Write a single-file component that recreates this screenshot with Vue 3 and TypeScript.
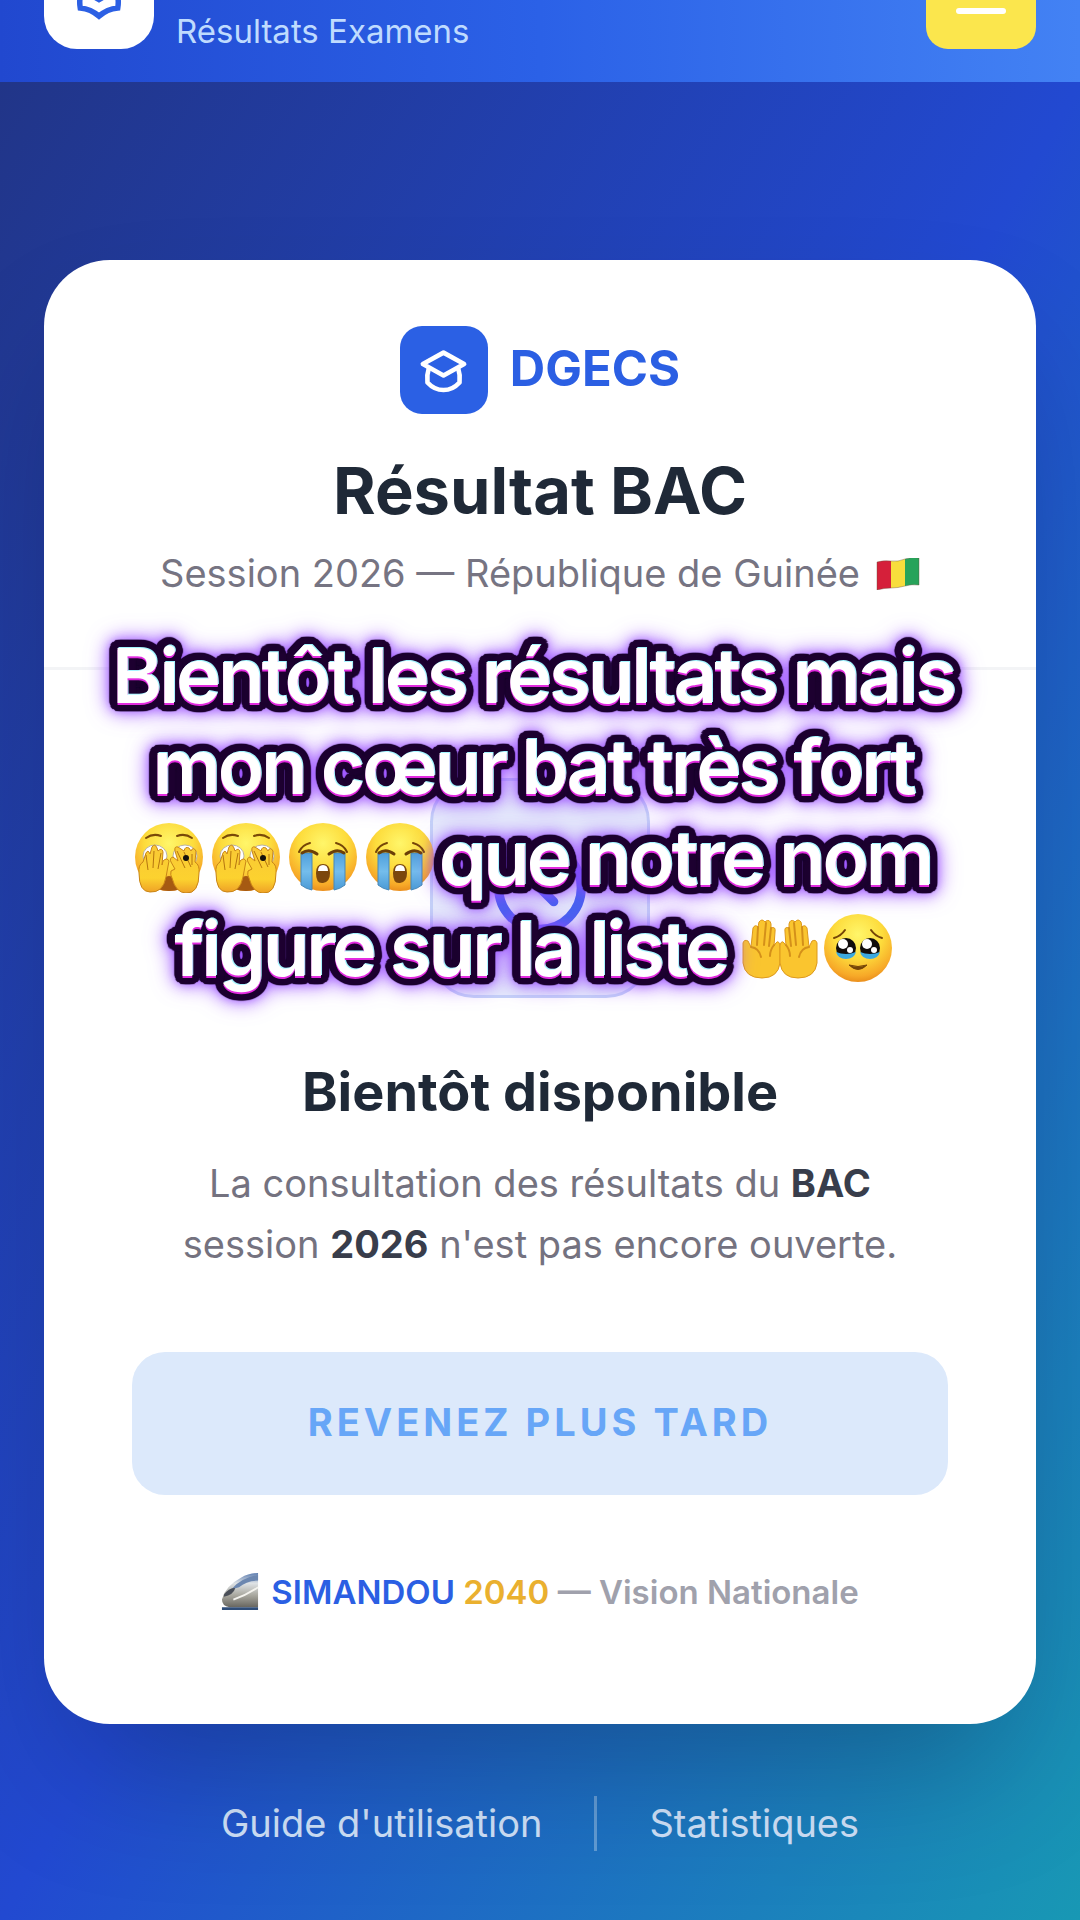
<script setup lang="ts">
interface CaptionPart {
  kind: 'text' | 'emoji'
  value: string
}

const caption: CaptionPart[][] = [
  [{ kind: 'text', value: 'Bientôt les résultats mais' }],
  [{ kind: 'text', value: 'mon cœur bat très fort' }],
  [
    { kind: 'emoji', value: 'peek' },
    { kind: 'emoji', value: 'peek' },
    { kind: 'emoji', value: 'sob' },
    { kind: 'emoji', value: 'sob' },
    { kind: 'text', value: 'que notre nom' },
  ],
  [
    { kind: 'text', value: 'figure sur la liste' },
    { kind: 'emoji', value: 'palms' },
    { kind: 'emoji', value: 'tears' },
  ],
]

// A ring of shadows makes a dark outline with round corners.
function ring(radius: number, steps: number): string[] {
  return Array.from({ length: steps }, (_, i) => {
    const angle = (i / steps) * Math.PI * 2
    const x = (Math.cos(angle) * radius).toFixed(2)
    const y = (Math.sin(angle) * radius).toFixed(2)
    return `${x}px ${y}px 1px #1d0030`
  })
}

const outline = [
  '0 2px #e22be0',
  '1px -1px #a5f6ff',
  ...ring(8, 40),
  ...ring(4, 16),
].join(', ')
</script>

<template>
  <div class="page">
    <svg class="sprites" aria-hidden="true">
      <defs>
        <radialGradient id="face" cx="50%" cy="30%" r="72%">
          <stop offset="0" stop-color="#fff66a" />
          <stop offset="0.5" stop-color="#fddc3c" />
          <stop offset="0.85" stop-color="#f7a928" />
          <stop offset="1" stop-color="#e8891a" />
        </radialGradient>
        <linearGradient id="skin" x1="0" y1="0" x2="0" y2="1">
          <stop offset="0" stop-color="#f9c935" />
          <stop offset="0.7" stop-color="#fcd22f" />
          <stop offset="1" stop-color="#efa226" />
        </linearGradient>
        <linearGradient id="tear" x1="0" y1="0" x2="0" y2="1">
          <stop offset="0" stop-color="#4f9fdb" />
          <stop offset="0.5" stop-color="#74bdec" />
          <stop offset="1" stop-color="#4a9ad6" />
        </linearGradient>
        <linearGradient id="steel" x1="0" y1="0" x2="0" y2="1">
          <stop offset="0" stop-color="#5d7db0" />
          <stop offset="0.3" stop-color="#dfe3e6" />
          <stop offset="0.65" stop-color="#a9a89f" />
          <stop offset="1" stop-color="#68665f" />
        </linearGradient>
      </defs>
      <symbol id="emoji-peek" viewBox="0 0 68 70">
        <circle cx="34" cy="34" r="34" fill="url(#face)" />
        <path d="M11 15q7-5 15-2M42 13q8-3 15 2" fill="none" stroke="#7a4a08" stroke-width="2" stroke-linecap="round" />
        <ellipse cx="20" cy="33" rx="12" ry="11" fill="#fff" stroke="#b9b2a4" />
        <ellipse cx="50" cy="33" rx="12" ry="11" fill="#fff" stroke="#b9b2a4" />
        <circle cx="50" cy="34" r="4" fill="#15100c" />
        <path d="M23 66q3-13 11-13t11 13q-11 4-22 0z" fill="#a65a12" />
        <g fill="url(#skin)" stroke="#c98516">
          <path d="M4 50q-1-8 4-11l3-9q2-4 4 1l2-7q3-4 5 1l1 3q4-4 5 1l-1 13 1-4q4-4 6 0l-3 16q-3 16-16 15-11 0-11-19z" />
          <path d="M64 50q1-8-4-11l1-11q-3-5-5 0l-2-3q-4-2-5 3l-6-4q-4-1-3 4l3 10-5-4q-4 1-2 5l4 7-4 2q-1 4 1 7 4 15 14 15 13 1 13-20z" />
        </g>
        <path d="M11 32l2 15M19 28l-1 17M26 30l-3 16M42 28l8 17M49 29l7 15M57 31v11" fill="none" stroke="#b5750f" />
        <circle cx="51" cy="35" r="3" fill="#15100c" />
      </symbol>
      <symbol id="emoji-sob" viewBox="0 0 68 70">
        <circle cx="34" cy="34" r="34" fill="url(#face)" />
        <path d="M10 29q3-7 11-9M58 29q-3-7-11-9" fill="none" stroke="#754507" stroke-width="2" stroke-linecap="round" />
        <path d="M12 30h11v37q-6-1-11-5zM45 30h11v32q-5 4-11 5z" fill="url(#tear)" stroke="#4687b8" />
        <path d="M13 30q7-5 15 1M55 30q-7-5-15 1" fill="none" stroke="#6b3f08" stroke-width="3" stroke-linecap="round" />
        <path d="M27 50q0-9 7-9t7 9-7 10-7-10z" fill="#7b470d" />
        <path d="M29 48q0-6 5-6t5 6z" fill="#fff" />
      </symbol>
      <symbol id="emoji-palms" viewBox="0 0 76 62">
        <g id="palm">
          <path d="M1 39V25q1-4 5-2l3 6L11 10q2-4 5-1l1-5q3-4 6 0l1-1q4-2 5 3v4q5-2 4 4l-1 14q4-8 6-1v18q-2 15-18 15Q3 60 1 45z" fill="#fac52f" stroke="#dd991d" />
          <path d="M16 9l-1 18M24 5l-2 22M29 10l-2 18M32 27q-4 5-4 11M9 29q8 1 10 10" fill="none" stroke="#d4901a" stroke-width="2" stroke-linecap="round" />
        </g>
        <use href="#palm" transform="matrix(-1 0 0 1 76 0)" />
      </symbol>
      <symbol id="emoji-tears" viewBox="0 0 68 70">
        <circle cx="34" cy="34" r="34" fill="url(#face)" />
        <path d="M10 24q7-2 11-8M58 24q-7-2-11-8" fill="none" stroke="#754507" stroke-width="2" stroke-linecap="round" />
        <circle cx="22" cy="34" r="10" fill="#100d0c" />
        <circle cx="46" cy="34" r="10" fill="#100d0c" />
        <path d="M12 38q10 4 20 0-2 7-10 7t-10-7zM36 38q10 4 20 0-2 7-10 7t-10-7z" fill="#3ba9e0" />
        <g fill="#fff">
          <circle cx="19" cy="30" r="5" />
          <circle cx="26" cy="36" r="3" />
          <circle cx="43" cy="30" r="5" />
          <circle cx="50" cy="36" r="3" />
        </g>
        <path d="M25 51q9 9 18 0-9 3-18 0z" fill="#754507" stroke="#754507" stroke-linejoin="round" />
      </symbol>
    </svg>

    <header class="topbar">
      <div class="topbar-brand">
        <span class="topbar-logo">
          <svg viewBox="0 0 24 24" class="topbar-cap" aria-hidden="true">
            <path d="M12 14l9-5-9-5-9 5 9 5zm0 0l6.16-3.422a12.083 12.083 0 01.665 6.479A11.952 11.952 0 0012 20.055a11.952 11.952 0 00-6.824-2.998 12.078 12.078 0 01.665-6.479L12 14z" />
          </svg>
        </span>
        <span class="topbar-subtitle">Résultats Examens</span>
      </div>
      <button class="menu" type="button" aria-label="Menu">
        <span class="menu-line"></span>
      </button>
    </header>

    <main class="main">
      <section class="card">
        <div class="card-head">
          <div class="brand">
            <span class="brand-tile">
              <svg viewBox="0 0 24 24" class="brand-cap" aria-hidden="true">
                <path d="M12 14.200l9-5-9-5-9 5 9 5z" />
                <path d="M5.600 11q-1 3-.6 6.200Q8 20.500 12 20.500t7-3.300q.4-3.200-.6-6.200" />
              </svg>
            </span>
            <span class="brand-name">DGECS</span>
          </div>
          <h1 class="title">Résultat BAC</h1>
          <p class="session">
            <span>Session 2026 — République de Guinée</span>
            <svg class="flag" viewBox="0 0 44 32" role="img" aria-label="Guinée">
              <path d="M1 4q7-2 14-1v27q-7 0-14 2z" fill="#d5203a" />
              <path d="M15 3q7 1 14-2v27q-7 2-14 2z" fill="#f8dd3c" />
              <path d="M29 1q7-2 14-1v27q-7-1-14 1z" fill="#27a35a" />
              <path d="M1 4q7-2 14-1t14-2 14-1v27q-7-1-14 1t-14 2-14 2z" fill="none" stroke="#66503a" stroke-opacity=".4" />
            </svg>
          </p>
        </div>

        <div class="card-body">
          <span class="clock-tile">
            <svg viewBox="0 0 24 24" class="clock" aria-hidden="true">
              <path d="M12 8v4l3 3m6-3a9 9 0 11-18 0 9 9 0 0118 0z" />
            </svg>
          </span>
          <h2 class="soon">Bientôt disponible</h2>
          <p class="message">
            La consultation des résultats du <strong>BAC</strong><br />
            session <strong>2026</strong> n'est pas encore ouverte.
          </p>
          <button class="later" type="button" disabled>REVENEZ PLUS TARD</button>
          <p class="vision">
            <svg class="train" viewBox="0 0 38 40" aria-hidden="true">
              <path d="M38 0v36H8Q0 35 0 28 3 14 20 5 28 0 38 0z" fill="url(#steel)" />
              <path d="M38 2Q20 5 10 17l8-2Q26 8 38 8z" fill="#6c87b0" />
              <path d="M2 23q6-8 12-7-2 7-12 9z" fill="#4a4f58" />
              <path d="M0 36h38v3H0z" fill="#2f4d78" />
              <path d="M12 28q14-5 26-13" fill="none" stroke="#f4f3ee" stroke-width="2" />
            </svg>
            <span><span class="simandou">SIMANDOU</span> <span class="year">2040</span> — Vision Nationale</span>
          </p>
        </div>

        <div class="caption">
          <div v-for="(line, i) in caption" :key="i" class="caption-line">
            <template v-for="(part, j) in line" :key="j">
              <span v-if="part.kind === 'text'" class="caption-text" :style="{ textShadow: outline }">{{ part.value }}</span>
              <svg v-else :class="['emoji', part.value]" aria-hidden="true">
                <use :href="'#emoji-' + part.value" />
              </svg>
            </template>
          </div>
        </div>
      </section>

      <nav class="links">
        <a href="#guide">Guide d'utilisation</a>
        <span class="links-rule"></span>
        <a href="#stats">Statistiques</a>
      </nav>
    </main>
  </div>
</template>

<style>
body {
  margin: 0;
  overflow-x: hidden;
}
</style>

<style scoped>
.page {
  display: flex;
  flex-direction: column;
  min-height: 100vh;
  font-family: Inter, sans-serif;
  color: #1f2937;
}

.sprites {
  position: absolute;
  width: 0;
  height: 0;
}

.topbar {
  display: flex;
  justify-content: space-between;
  align-items: flex-end;
  box-sizing: border-box;
  height: 82px;
  padding: 0 44px 33px;
  overflow: hidden;
  background: linear-gradient(to right, #2148cf, #2b61e7 50%, #4382f4);
}

.topbar-brand {
  display: flex;
  align-items: flex-end;
  gap: 22px;
}

.topbar-logo {
  display: flex;
  align-items: center;
  justify-content: center;
  width: 110px;
  height: 110px;
  border-radius: 33px;
  background: #fff;
}

.topbar-cap {
  width: 66px;
  height: 66px;
  fill: none;
  stroke: #2c60e4;
  stroke-width: 2;
}

.topbar-subtitle {
  font-size: 33px;
  line-height: 36px;
  color: #bfdbfe;
}

.menu {
  display: flex;
  align-items: flex-end;
  justify-content: center;
  width: 110px;
  height: 110px;
  padding: 0 0 35px;
  border: 0;
  border-radius: 22px;
  background: #fbe64d;
}

.menu-line {
  width: 50px;
  height: 6px;
  border-radius: 3px;
  background: #fff;
}

.main {
  flex: 1;
  display: flex;
  flex-direction: column;
  padding: 178px 44px 70px;
  background: linear-gradient(to bottom right, #213588, #2249d1 50%, #1898b4);
}

.card {
  position: relative;
  border-radius: 66px;
  background: #fff;
  box-shadow: 0 69px 138px -33px rgba(0, 0, 0, 0.25);
}

.card-head {
  display: flex;
  flex-direction: column;
  align-items: center;
  padding: 66px 44px;
  border-bottom: 3px solid #f3f4f6;
}

.brand {
  display: flex;
  align-items: center;
  gap: 22px;
}

.brand-tile {
  display: flex;
  align-items: center;
  justify-content: center;
  width: 88px;
  height: 88px;
  border-radius: 22px;
  background: #2b60e4;
}

.brand-cap {
  width: 55px;
  height: 55px;
  fill: none;
  stroke: #fff;
  stroke-width: 2;
  stroke-linejoin: round;
  stroke-linecap: round;
}

.brand-name {
  padding-bottom: 3px;
  font-size: 49px;
  line-height: 77px;
  font-weight: 700;
  color: #2b5fe3;
}

.title {
  margin: 33px 0 11px;
  font-size: 65px;
  line-height: 88px;
  font-weight: 700;
}

.session {
  display: flex;
  align-items: center;
  gap: 16px;
  margin: 0;
  font-size: 38px;
  line-height: 55px;
  color: #767482;
}

.flag {
  width: 44px;
  height: 32px;
}

.card-body {
  display: flex;
  flex-direction: column;
  align-items: center;
  padding: 108px 88px 110px;
}

.clock-tile {
  display: flex;
  align-items: center;
  justify-content: center;
  box-sizing: border-box;
  width: 220px;
  height: 220px;
  border: 3px solid #c5d3f7;
  border-radius: 44px;
  background: #e6ecfb;
}

.clock {
  width: 110px;
  height: 110px;
  fill: none;
  stroke: #4263ef;
  stroke-width: 2;
  stroke-linecap: round;
  stroke-linejoin: round;
}

.soon {
  margin: 55px 0 22px;
  font-size: 54px;
  line-height: 78px;
  font-weight: 700;
}

.message {
  margin: 0 0 77px;
  font-size: 38px;
  line-height: 61px;
  text-align: center;
  color: #74727f;
}

.message strong {
  font-weight: 700;
  color: #383d4b;
}

.later {
  width: 100%;
  height: 143px;
  padding: 0 0 3px;
  border: 0;
  border-radius: 33px;
  background: #dce9fb;
  color: #67a6f7;
  font-family: inherit;
  font-size: 38px;
  font-weight: 700;
  letter-spacing: 4px;
}

.vision {
  display: flex;
  align-items: center;
  gap: 12px;
  margin: 75px 0 0;
  font-size: 33px;
  line-height: 44px;
  font-weight: 600;
  color: #a0a1ac;
}

.train {
  width: 38px;
  height: 38px;
}

.simandou {
  color: #2b5fe3;
}

.year {
  color: #eab02f;
}

.links {
  display: flex;
  align-items: center;
  justify-content: center;
  gap: 52px;
  margin-top: 72px;
  font-size: 38px;
  line-height: 55px;
}

.links a {
  color: #cfe1f9;
  text-decoration: none;
}

.links-rule {
  width: 3px;
  height: 55px;
  background: rgba(255, 255, 255, 0.3);
}

.caption {
  position: absolute;
  top: 370px;
  left: 0;
  right: 14px;
}

.caption-line {
  display: flex;
  justify-content: center;
  align-items: center;
  gap: 9px;
  height: 91px;
}

.caption-text {
  font-size: 76px;
  line-height: 91px;
  font-weight: 600;
  letter-spacing: -3px;
  white-space: nowrap;
  color: #fff;
  filter: drop-shadow(0 0 5px rgba(150, 70, 255, 0.6)) drop-shadow(0 0 10px rgba(150, 70, 255, 0.8));
}

.emoji {
  flex: none;
  width: 68px;
  height: 70px;
}

.palms {
  width: 76px;
  height: 62px;
  margin-left: 6px;
  margin-right: -3px;
}

.sob + .caption-text {
  margin-left: -4px;
}
</style>
